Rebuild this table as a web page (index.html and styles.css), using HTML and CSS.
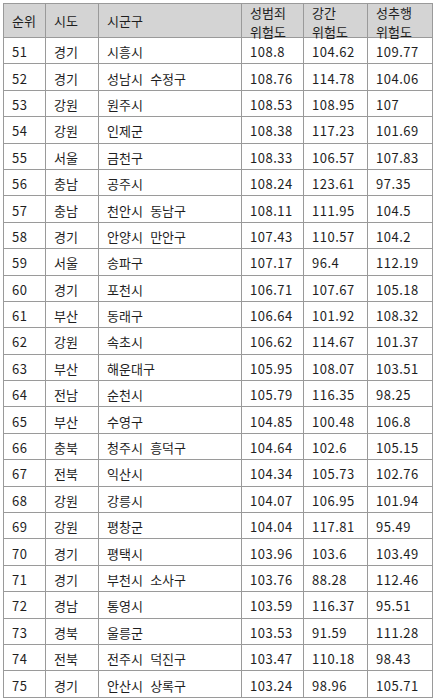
FILE: index.html
```html
<!DOCTYPE html>
<html lang="ko">
<head>
<meta charset="utf-8">
<link rel="stylesheet" href="styles.css">
</head>
<body>
<table class="rank-table">
<colgroup>
<col class="c-rank"><col class="c-sido"><col class="c-sigungu"><col class="c-total"><col class="c-rape"><col class="c-harass">
</colgroup>
<thead>
<tr><th>순위</th><th>시도</th><th>시군구</th><th><span class="two-line">성범죄<br>위험도</span></th><th><span class="two-line">강간<br>위험도</span></th><th><span class="two-line">성추행<br>위험도</span></th></tr>
</thead>
<tbody>
<tr><td>51</td><td>경기</td><td>시흥시</td><td>108.8</td><td>104.62</td><td>109.77</td></tr>
<tr><td>52</td><td>경기</td><td>성남시&nbsp; 수정구</td><td>108.76</td><td>114.78</td><td>104.06</td></tr>
<tr><td>53</td><td>강원</td><td>원주시</td><td>108.53</td><td>108.95</td><td>107</td></tr>
<tr><td>54</td><td>강원</td><td>인제군</td><td>108.38</td><td>117.23</td><td>101.69</td></tr>
<tr><td>55</td><td>서울</td><td>금천구</td><td>108.33</td><td>106.57</td><td>107.83</td></tr>
<tr><td>56</td><td>충남</td><td>공주시</td><td>108.24</td><td>123.61</td><td>97.35</td></tr>
<tr><td>57</td><td>충남</td><td>천안시&nbsp; 동남구</td><td>108.11</td><td>111.95</td><td>104.5</td></tr>
<tr><td>58</td><td>경기</td><td>안양시&nbsp; 만안구</td><td>107.43</td><td>110.57</td><td>104.2</td></tr>
<tr><td>59</td><td>서울</td><td>송파구</td><td>107.17</td><td>96.4</td><td>112.19</td></tr>
<tr><td>60</td><td>경기</td><td>포천시</td><td>106.71</td><td>107.67</td><td>105.18</td></tr>
<tr><td>61</td><td>부산</td><td>동래구</td><td>106.64</td><td>101.92</td><td>108.32</td></tr>
<tr><td>62</td><td>강원</td><td>속초시</td><td>106.62</td><td>114.67</td><td>101.37</td></tr>
<tr><td>63</td><td>부산</td><td>해운대구</td><td>105.95</td><td>108.07</td><td>103.51</td></tr>
<tr><td>64</td><td>전남</td><td>순천시</td><td>105.79</td><td>116.35</td><td>98.25</td></tr>
<tr><td>65</td><td>부산</td><td>수영구</td><td>104.85</td><td>100.48</td><td>106.8</td></tr>
<tr><td>66</td><td>충북</td><td>청주시&nbsp; 흥덕구</td><td>104.64</td><td>102.6</td><td>105.15</td></tr>
<tr><td>67</td><td>전북</td><td>익산시</td><td>104.34</td><td>105.73</td><td>102.76</td></tr>
<tr><td>68</td><td>강원</td><td>강릉시</td><td>104.07</td><td>106.95</td><td>101.94</td></tr>
<tr><td>69</td><td>강원</td><td>평창군</td><td>104.04</td><td>117.81</td><td>95.49</td></tr>
<tr><td>70</td><td>경기</td><td>평택시</td><td>103.96</td><td>103.6</td><td>103.49</td></tr>
<tr><td>71</td><td>경기</td><td>부천시&nbsp; 소사구</td><td>103.76</td><td>88.28</td><td>112.46</td></tr>
<tr><td>72</td><td>경남</td><td>통영시</td><td>103.59</td><td>116.37</td><td>95.51</td></tr>
<tr><td>73</td><td>경북</td><td>울릉군</td><td>103.53</td><td>91.59</td><td>111.28</td></tr>
<tr><td>74</td><td>전북</td><td>전주시&nbsp; 덕진구</td><td>103.47</td><td>110.18</td><td>98.43</td></tr>
<tr><td>75</td><td>경기</td><td>안산시&nbsp; 상록구</td><td>103.24</td><td>98.96</td><td>105.71</td></tr>
</tbody>
</table>
</body>
</html>
```
FILE: styles.css
```css
html, body {
  margin: 0;
  padding: 0;
  background: #ffffff;
}
body {
  padding: 3px 0 0 3px;
  font-family: "Noto Sans CJK KR", "Noto Sans", sans-serif;
  font-size: 13px;
  color: #1e1e1e;
}
.rank-table {
  border-collapse: collapse;
  table-layout: fixed;
  width: 429px;
}
.c-rank { width: 42px; }
.c-sido { width: 53px; }
.c-sigungu { width: 143px; }
.c-total { width: 62px; }
.c-rape { width: 64px; }
.c-harass { width: 65px; }
.rank-table th,
.rank-table td {
  border: 1px solid #9a9a9a;
  padding: 0 0 0 8px;
  text-align: left;
  vertical-align: middle;
  white-space: nowrap;
}
.rank-table th {
  background: #d4d4d4;
  font-weight: normal;
  height: 33px;
  line-height: 16px;
}
.two-line {
  display: block;
  line-height: 19px;
  margin: -2px 0 -4px;
}
.rank-table td {
  height: 22.4px;
  line-height: 16px;
  padding-top: 3px;
}
.rank-table td:first-child,
.rank-table td:nth-child(n+4) {
  letter-spacing: 0.5px;
}
```
